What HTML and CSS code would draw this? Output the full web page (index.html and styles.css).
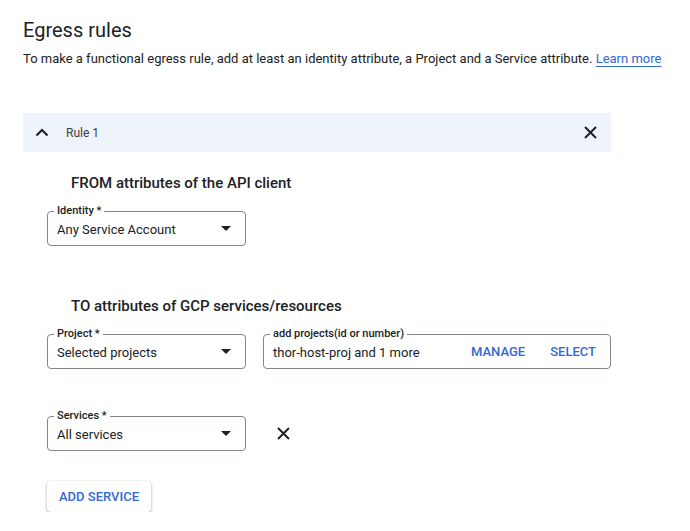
FILE: index.html
```html
<!DOCTYPE html>
<html>
<head>
<meta charset="utf-8">
<link rel="stylesheet" href="styles.css">
</head>
<body>
<div class="page">
  <h1 class="title">Egress rules</h1>
  <p class="desc">To make a functional egress rule, add at least an identity attribute, a Project and a Service attribute. <a class="link" href="#">Learn more</a></p>

  <div class="rule-head">
    <div class="rule-left">
      <svg class="chev" width="14" height="9" viewBox="0 0 14 9"><path d="M1.5 7.5 L7 2 L12.5 7.5" fill="none" stroke="#202124" stroke-width="2.2"/></svg>
      <span class="rule-name">Rule 1</span>
    </div>
    <svg class="close" width="13" height="13" viewBox="0 0 13 13"><path d="M1 1 L12 12 M12 1 L1 12" stroke="#202124" stroke-width="2"/></svg>
  </div>

  <div class="rule-body">
    <h2 class="section">FROM attributes of the API client</h2>
    <div class="row first">
      <div class="field select">
        <span class="label">Identity *</span>
        <span class="value">Any Service Account</span>
        <span class="caret"></span>
      </div>
    </div>

    <h2 class="section to">TO attributes of GCP services/resources</h2>
    <div class="row projects">
      <div class="field select">
        <span class="label">Project *</span>
        <span class="value">Selected projects</span>
        <span class="caret"></span>
      </div>
      <div class="field wide">
        <span class="label">add projects(id or number)</span>
        <span class="value">thor-host-proj and 1 more</span>
        <span class="actions"><span class="act">MANAGE</span><span class="act">SELECT</span></span>
      </div>
    </div>

    <div class="row services">
      <div class="field select">
        <span class="label">Services *</span>
        <span class="value">All services</span>
        <span class="caret"></span>
      </div>
      <svg class="remove" width="13" height="13" viewBox="0 0 13 13"><path d="M1 1 L12 12 M12 1 L1 12" stroke="#202124" stroke-width="2"/></svg>
    </div>

    <button class="add-btn">ADD SERVICE</button>
  </div>
</div>
</body>
</html>
```
FILE: styles.css
```css
html, body {
  margin: 0;
  padding: 0;
  background: #fff;
}
body {
  font-family: Roboto, "Liberation Sans", Arial, sans-serif;
  color: #202124;
}
.page {
  padding: 16px 0 0 23px;
}
.title {
  margin: 0;
  font-size: 20px;
  font-weight: 400;
  line-height: 28px;
  color: #202124;
}
.desc {
  margin: 7px 0 0 0;
  font-size: 13px;
  line-height: 16px;
  color: #202124;
}
.link {
  color: #3367d6;
  text-decoration: underline;
  text-underline-offset: 3px;
}
.rule-head {
  margin-top: 46px;
  width: 588px;
  height: 39px;
  background: #eef3fc;
  display: flex;
  align-items: center;
  justify-content: space-between;
  box-sizing: border-box;
  padding: 0 14px 0 12px;
}
.rule-left {
  display: flex;
  align-items: center;
}
.chev {
  display: block;
  margin-right: 17px;
}
.rule-name {
  font-size: 12px;
  color: #3c4043;
}
.close {
  display: block;
}
.rule-body {
  padding-left: 24px;
}
.section {
  margin: 22px 0 0 24px;
  font-size: 15px;
  font-weight: 500;
  line-height: 18px;
  color: #202124;
}
.section.to {
  margin-top: 51px;
}
.row {
  display: flex;
  align-items: center;
}
.row.first {
  margin-top: 19px;
}
.row.projects {
  margin-top: 19px;
}
.field {
  position: relative;
  box-sizing: border-box;
  height: 35px;
  border: 1px solid #80868b;
  border-radius: 4px;
  display: flex;
  align-items: center;
  padding: 0 9px;
  font-size: 13px;
}
.select {
  width: 199px;
}
.wide {
  width: 348px;
  margin-left: 17px;
}
.label {
  position: absolute;
  top: -8px;
  left: 6px;
  padding: 0 3px;
  background: #fff;
  font-size: 11px;
  font-weight: 500;
  line-height: 14px;
  color: #202124;
}
.value {
  flex: 1;
  padding-top: 1px;
}
.caret {
  width: 0;
  height: 0;
  border-left: 5px solid transparent;
  border-right: 5px solid transparent;
  border-top: 5px solid #202124;
  margin-right: 5px;
}
.actions {
  display: flex;
  gap: 25px;
  margin-right: 5px;
}
.act {
  font-size: 13px;
  font-weight: 500;
  color: #3367d6;
}
.services {
  margin-top: 47px;
}
.remove {
  display: block;
  margin-left: 31px;
}
.add-btn {
  display: block;
  margin-top: 30px;
  width: 104px;
  height: 31px;
  border: none;
  border-radius: 4px;
  background: #fff;
  box-shadow: 0 1px 2px rgba(60,64,67,0.3), 0 1px 3px 1px rgba(60,64,67,0.15);
  font-family: Roboto, "Liberation Sans", Arial, sans-serif;
  font-size: 13px;
  font-weight: 500;
  color: #3367d6;
  padding: 0;
}
```
